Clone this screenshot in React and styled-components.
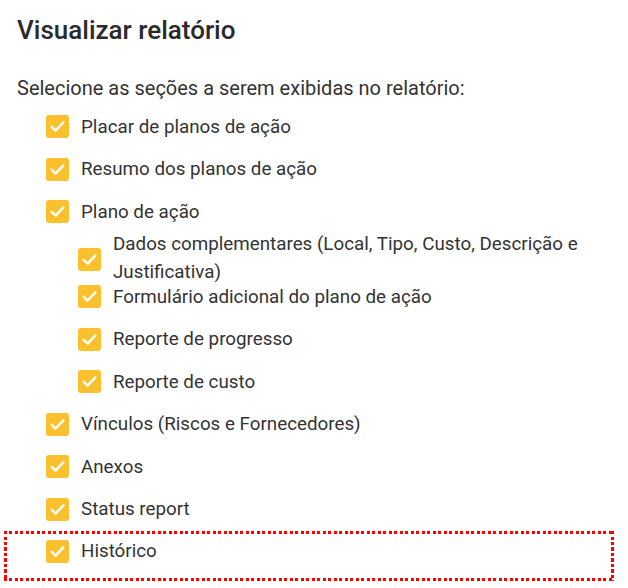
import React from 'react';
import styled, { createGlobalStyle } from 'styled-components';

const GlobalStyle = createGlobalStyle`
	body {
		margin: 0;
		background: #fff;
		font-family: Roboto, 'Liberation Sans', sans-serif;
		color: #333;
	}
`;

const Page = styled.div`
	padding: 12px 17px 0 17px;
`;

const Title = styled.h2`
	margin: 0;
	font-size: 26px;
	font-weight: 500;
	line-height: 36px;
	color: #2a2a2a;
`;

const Intro = styled.p`
	margin: 26px 0 0 0;
	font-size: 20px;
	line-height: 28px;
	color: #333;
`;

const List = styled.div`
	display: flex;
	flex-direction: column;
	margin-top: 3.5px;
`;

const Row = styled.label`
	display: flex;
	align-items: center;
	gap: 12px;
	height: 42.5px;
	padding-left: ${(p) => (p.$nested ? 61 : 29)}px;
	padding-top: ${(p) => (p.$wrap ? 7 : 0)}px;
	box-sizing: border-box;
	font-size: 18.8px;
	line-height: 28px;
	color: #333;
`;

const Box = styled.span`
	flex: none;
	width: 23px;
	height: 23px;
	border-radius: 3px;
	background: #fbc02d;
	display: flex;
	align-items: center;
	justify-content: center;
	margin-top: ${(p) => (p.$wrap ? 4 : 0)}px;
`;

const Text = styled.span`
	white-space: ${(p) => (p.$wrap ? 'normal' : 'nowrap')};
`;

const dots = (dir) =>
	`repeating-linear-gradient(${dir}, #ff0000 0 3px, transparent 3px 5.5px)`;

const Highlight = styled.div`
	margin-left: -13px;
	width: 610px;
	padding: 0 0 11.75px 13px;
	box-sizing: border-box;
	background:
		${dots('90deg')} top left / 100% 3px no-repeat,
		${dots('90deg')} bottom left / 100% 3px no-repeat,
		${dots('180deg')} top left / 3px 100% no-repeat,
		${dots('180deg')} top right / 3px 100% no-repeat;
	& > label {
		height: 39px;
		padding-top: 2.5px;
	}
`;

const Check = () => (
	<svg width='17' height='17' viewBox='0 0 16 16'>
		<path d='M2.6 8.3 L6.2 11.8 L13.5 4.2' fill='none' stroke='#fff' strokeWidth='2.3' strokeLinecap='round' strokeLinejoin='round' />
	</svg>
);

const Item = ({ children, nested, wrap }) => (
	<Row $nested={nested} $wrap={wrap}>
		<Box $wrap={wrap}>
			<Check />
		</Box>
		<Text $wrap={wrap}>{children}</Text>
	</Row>
);

const App = () => (
	<Page>
		<GlobalStyle />
		<Title>Visualizar relatório</Title>
		<Intro>Selecione as seções a serem exibidas no relatório:</Intro>
		<List>
			<Item>Placar de planos de ação</Item>
			<Item>Resumo dos planos de ação</Item>
			<Item>Plano de ação</Item>
			<Item nested wrap>
				Dados complementares (Local, Tipo, Custo, Descrição e Justificativa)
			</Item>
			<Item nested>Formulário adicional do plano de ação</Item>
			<Item nested>Reporte de progresso</Item>
			<Item nested>Reporte de custo</Item>
			<Item>Vínculos (Riscos e Fornecedores)</Item>
			<Item>Anexos</Item>
			<Item>Status report</Item>
			<Highlight>
				<Item>Histórico</Item>
			</Highlight>
		</List>
	</Page>
);

export default App;
